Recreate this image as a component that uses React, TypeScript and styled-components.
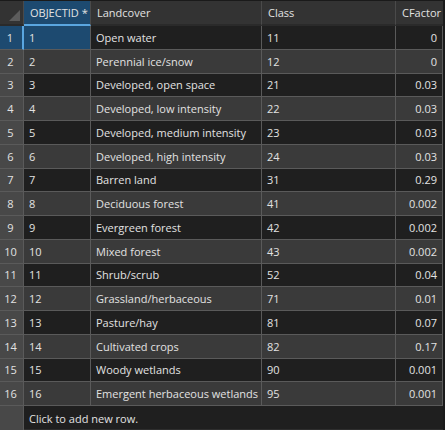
import * as React from "react";
import styled, { createGlobalStyle } from "styled-components";

const GlobalStyle = createGlobalStyle`
    html, body {
        margin: 0;
        padding: 0;
        background: #1e1e1e;
    }
`

const COLS = "24px 67px 171px 134px 1fr"

const Table = styled.div`
    width: 445px;
    height: 430px;
    overflow: hidden;
    background: #1e1e1e;
    border-top: 1px solid #1a1a1a;
    border-right: 2px solid #1a1a1a;
    box-sizing: border-box;
    font-family: "Open Sans", "Noto Sans", sans-serif;
    font-size: 11px;
    color: #e2e2e2;
`

const Row = styled.div`
    display: grid;
    grid-template-columns: ${COLS};
    height: 23.75px;
`

const HeaderRow = styled(Row)`
    height: 25px;
    background: #333333;
`

const HeadCell = styled.div<{ $active?: boolean }>`
    display: flex;
    align-items: center;
    padding: 0 6px;
    border-right: 1px solid #4a4a4a;
    box-sizing: border-box;
    background: ${p => (p.$active ? "#1d4a70" : "transparent")};
    border-bottom: 2px solid ${p => (p.$active ? "#5aa6e0" : "#2a2a2a")};
    white-space: nowrap;
`

const Corner = styled.div`
    position: relative;
    border-right: 1px solid #4a4a4a;
    border-bottom: 2px solid #2a2a2a;
    background: #333333;

    &::after {
        content: "";
        position: absolute;
        right: 3px;
        bottom: 3px;
        border-style: solid;
        border-width: 0 0 11px 11px;
        border-color: transparent transparent #5c5c5c transparent;
    }
`

const RowNum = styled.div<{ $selected?: boolean }>`
    display: flex;
    align-items: center;
    justify-content: center;
    background: ${p => (p.$selected ? "#1d4a70" : "#484848")};
    border-bottom: 1px solid #5a5a5a;
    border-right: ${p => (p.$selected ? "2px solid #5aa6e0" : "1px solid #5a5a5a")};
    box-sizing: border-box;
    padding-right: 2px;
`

const Cell = styled.div<{ $shade: "dark" | "light" | "sel"; $right?: boolean }>`
    display: flex;
    align-items: center;
    justify-content: ${p => (p.$right ? "flex-end" : "flex-start")};
    padding: 0 5px;
    background: ${p =>
        p.$shade === "sel" ? "#1d4a70" : p.$shade === "dark" ? "#1f1f1f" : "#3a3a3a"};
    border-right: 1px solid #5a5a5a;
    border-bottom: 1px solid #5a5a5a;
    box-sizing: border-box;
    white-space: nowrap;
    overflow: hidden;
`

const NewRow = styled.div`
    display: grid;
    grid-template-columns: 24px 1fr;
    height: 30px;
`

const NewRowGutter = styled.div`
    background: #484848;
    border-right: 1px solid #5a5a5a;
`

const NewRowText = styled.div`
    padding: 5px 5px 0;
    background: #1f1f1f;
    height: 24px;
    box-sizing: border-box;
    border-bottom: 1px solid #2e2e2e;
`

type Landcover = { name: string; cls: number; cf: string }

const rows: Landcover[] = [
    { name: "Open water", cls: 11, cf: "0" },
    { name: "Perennial ice/snow", cls: 12, cf: "0" },
    { name: "Developed, open space", cls: 21, cf: "0.03" },
    { name: "Developed, low intensity", cls: 22, cf: "0.03" },
    { name: "Developed, medium intensity", cls: 23, cf: "0.03" },
    { name: "Developed, high intensity", cls: 24, cf: "0.03" },
    { name: "Barren land", cls: 31, cf: "0.29" },
    { name: "Deciduous forest", cls: 41, cf: "0.002" },
    { name: "Evergreen forest", cls: 42, cf: "0.002" },
    { name: "Mixed forest", cls: 43, cf: "0.002" },
    { name: "Shrub/scrub", cls: 52, cf: "0.04" },
    { name: "Grassland/herbaceous", cls: 71, cf: "0.01" },
    { name: "Pasture/hay", cls: 81, cf: "0.07" },
    { name: "Cultivated crops", cls: 82, cf: "0.17" },
    { name: "Woody wetlands", cls: 90, cf: "0.001" },
    { name: "Emergent herbaceous wetlands", cls: 95, cf: "0.001" },
]

const App = () => {
    return (
        <>
            <GlobalStyle />
            <Table>
                <HeaderRow>
                    <Corner />
                    <HeadCell $active>OBJECTID *</HeadCell>
                    <HeadCell>Landcover</HeadCell>
                    <HeadCell>Class</HeadCell>
                    <HeadCell>CFactor</HeadCell>
                </HeaderRow>
                {rows.map((r, i) => {
                    const shade = i % 2 === 0 ? "dark" : "light"
                    const sel = i === 0
                    return (
                        <Row key={i}>
                            <RowNum $selected={sel}>{i + 1}</RowNum>
                            <Cell $shade={sel ? "sel" : shade}>{i + 1}</Cell>
                            <Cell $shade={shade}>{r.name}</Cell>
                            <Cell $shade={shade}>{r.cls}</Cell>
                            <Cell $shade={shade} $right>{r.cf}</Cell>
                        </Row>
                    )
                })}
                <NewRow>
                    <NewRowGutter />
                    <NewRowText>Click to add new row.</NewRowText>
                </NewRow>
            </Table>
        </>
    )
}

export default App
